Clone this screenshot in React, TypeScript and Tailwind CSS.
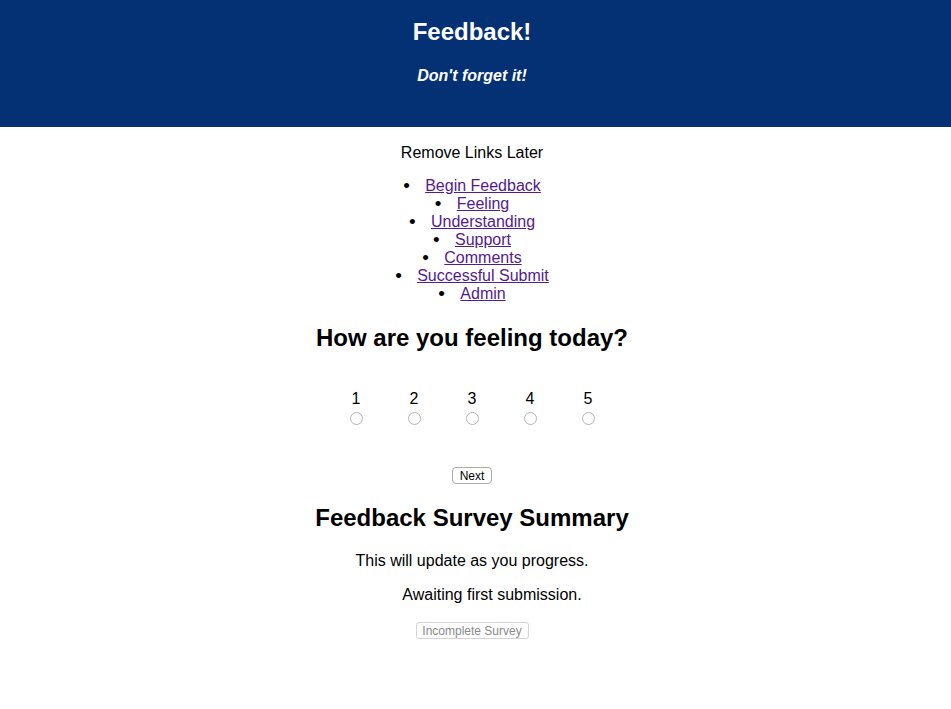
import React from "react";

const links = ["Begin Feedback", "Feeling", "Understanding", "Support", "Comments", "Successful Submit", "Admin"];
const scores = [1, 2, 3, 4, 5];

export default function App() {
  return (
    <div className="min-h-screen bg-white text-black font-['Liberation_Sans',Arial,sans-serif]">
      {/* Header */}
      <header className="h-[127px] bg-[#033174] text-white pt-[18px] pr-[7px] flex flex-col items-center">
        <h1 className="text-[24px] leading-[28px] font-bold">Feedback!</h1>
        <h4 className="mt-[20px] text-[16px] leading-[20px] font-bold italic">Don't forget it!</h4>
      </header>

      <main className="pr-[7px] flex flex-col items-center text-[16px] leading-[18px]">
        <p className="mt-[17px]">Remove Links Later</p>

        {/* Temporary nav */}
        <ul className="mt-[15px] flex flex-col items-center pl-[22px]">
          {links.map((l) => (
            <li key={l} className="flex items-center h-[18px]">
              <span className="w-[20px] -ml-[22px] mr-[2px] text-[19px] leading-[18px]">•</span>
              <a href="#" className="text-[#551a8b] underline">{l}</a>
            </li>
          ))}
        </ul>

        <h2 className="mt-[21px] text-[24px] leading-[28px] font-bold">How are you feeling today?</h2>

        <div className="mt-[38px] flex">
          {scores.map((n) => (
            <label key={n} className="w-[58px] flex flex-col items-center">
              <span>{n}</span>
              <input
                type="radio"
                name="feeling"
                value={n}
                className="mt-[4px] appearance-none w-[13px] h-[13px] rounded-full border border-[#b5b5b5] bg-white"
              />
            </label>
          ))}
        </div>

        <button className="mt-[42px] h-[17px] w-[40px] rounded-[4px] border border-[#aaaaaa] bg-white text-[12px] leading-[14px] text-black">
          Next
        </button>

        <h2 className="mt-[20px] text-[24px] leading-[28px] font-bold">Feedback Survey Summary</h2>
        <p className="mt-[20px]">This will update as you progress.</p>
        <p className="mt-[16px] pl-[40px]">Awaiting first submission.</p>

        <button
          disabled
          className="mt-[18px] h-[17px] w-[113px] rounded-[3px] border border-[#d4d4d4] bg-white text-[12px] leading-[14px] text-[#8a8a8a]"
        >
          Incomplete Survey
        </button>
      </main>
    </div>
  );
}
